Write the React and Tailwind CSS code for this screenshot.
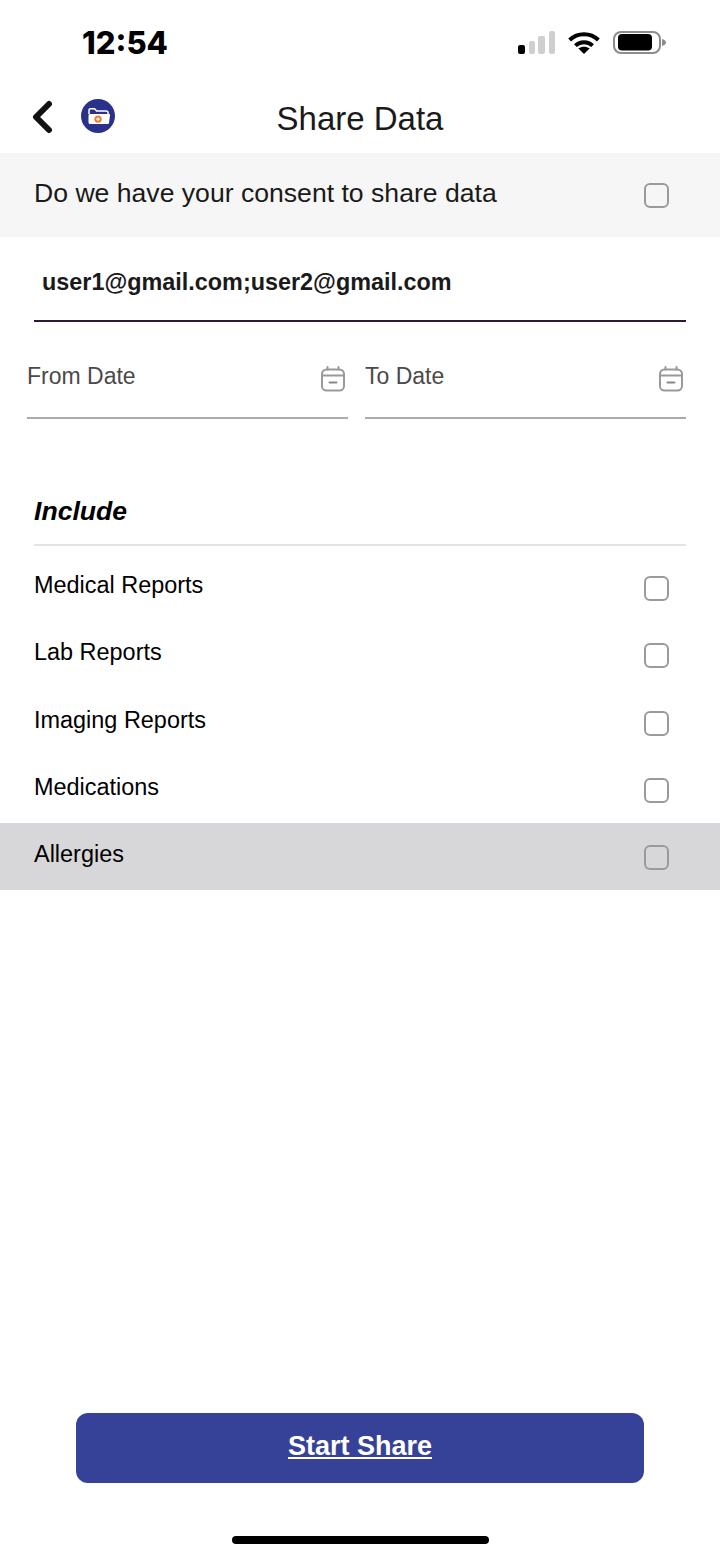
const includeItems = [
  { name: 'Medical Reports' },
  { name: 'Lab Reports' },
  { name: 'Imaging Reports' },
  { name: 'Medications' },
  { name: 'Allergies', active: true },
];

const Checkbox = () => (
  <div className="w-[25px] h-[25px] rounded-[6px] border-2 border-[#9a9a9a]" />
);

const CalendarIcon = () => (
  <svg width="26" height="26" viewBox="0 0 26 26" fill="none" stroke="#999" strokeWidth="2" strokeLinecap="round">
    <rect x="2" y="3.5" width="22" height="21" rx="4.5" />
    <path d="M2.5 9.5H23.5" />
    <path d="M7.5 1V3.5M18.5 1V3.5" />
    <path d="M9.5 16.5H16.5" stroke="#888" />
  </svg>
);

const DateField = ({ label }) => (
  <div className="flex-1 h-[97px] border-b-2 border-[#ababab] flex items-start justify-between">
    <span className="text-[23px] leading-[28px] mt-[40px] text-[#4a4a4a]">{label}</span>
    <div className="mt-[44px] mr-[2px]">
      <CalendarIcon />
    </div>
  </div>
);

const StatusBar = () => (
  <div className="h-[80px] shrink-0 flex items-start justify-between">
    <span className="ml-[82px] mt-[24px] text-[31px] leading-[38px] font-extrabold text-black font-['Inter',sans-serif]">12:54</span>
    <div className="flex items-start mt-[31px] mr-[54px]">
      <svg width="37" height="23" viewBox="0 0 37 23" className="mr-[13px]">
        <rect x="0" y="14" width="7" height="9" rx="2" fill="#000" />
        <rect x="11" y="10" width="6" height="13" rx="2" fill="#cfcfcf" />
        <rect x="20" y="5" width="7" height="18" rx="2" fill="#cfcfcf" />
        <rect x="31" y="0" width="6" height="23" rx="2" fill="#cfcfcf" />
      </svg>
      <svg width="32" height="23" viewBox="0 0 32 23" className="mr-[13px]" fill="none" stroke="#000" strokeWidth="4">
        <path d="M1.6 9C9.6 1.2 22.4 1.2 30.4 9" />
        <path d="M7.4 14.6C12.2 10 19.8 10 24.6 14.6" />
        <path d="M16 23L10.4 17.6C13.6 15 18.4 15 21.6 17.6Z" fill="#000" stroke="none" />
      </svg>
      <svg width="53" height="23" viewBox="0 0 53 23">
        <rect x="1" y="1" width="46" height="21" rx="7" fill="none" stroke="#8c8c8c" strokeWidth="2" />
        <rect x="5" y="3" width="34" height="16.5" rx="4" fill="#000" />
        <path d="M49 8C52 8.8 53 10 53 11.5S52 14.2 49 15Z" fill="#8c8c8c" />
      </svg>
    </div>
  </div>
);

const NavBar = () => (
  <div className="relative h-[73px] shrink-0 flex items-start">
    <svg width="24" height="34" viewBox="0 0 24 34" className="ml-[31px] mt-[20px]" fill="none" stroke="#111" strokeWidth="6" strokeLinecap="round" strokeLinejoin="round">
      <path d="M18 4L5 17L18 30" />
    </svg>
    <svg width="34" height="34" viewBox="0 0 34 34" className="ml-[26px] mt-[19px]">
      <circle cx="17" cy="17" r="17" fill="#29318a" />
      {/* folder back outline */}
      <path d="M8 15V11.5C8 10.4 8.7 9.8 9.8 9.8H13.6L15.6 12H25C26.2 12 27 12.7 27 13.8V15" fill="none" stroke="#fff" strokeWidth="1.5" />
      <path d="M7.5 16.5C7.5 15.6 8.2 15 9 15H28C28.8 15 29.2 15.5 29 16.2L28 24C27.9 24.7 27.3 25 26.6 25H9C8.1 25 7.5 24.4 7.5 23.5Z" fill="#fff" />
      <circle cx="17" cy="20.2" r="3.6" fill="#ee7a2e" />
      <path d="M15.1 20.2H18.9M17 18.3V22.1" stroke="#fff" strokeWidth="1.2" />
    </svg>
    <span className="absolute inset-x-0 top-[20px] text-center text-[33px] leading-[38px] text-[#1a1a1a]">Share Data</span>
  </div>
);

export default function App() {
  return (
    <div className="w-[720px] h-[1558px] bg-white flex flex-col font-['Liberation_Sans',Arial,sans-serif]">
      <StatusBar />
      <NavBar />

      {/* consent */}
      <div className="h-[84px] shrink-0 bg-[#f6f6f6] flex items-center justify-between pl-[34px] pr-[50px]">
        <span className="text-[26.6px] leading-[32px] text-[#1a1a1a] mb-[5px]">Do we have your consent to share data</span>
        <div className="mt-[1px] mr-px">
          <Checkbox />
        </div>
      </div>

      {/* email */}
      <div className="h-[85px] shrink-0 mx-[34px] border-b-2 border-[#2c1a2e] flex items-start pl-[8px]">
        <span className="mt-[31px] text-[23.4px] leading-[28px] font-bold text-[#1a1a1a]">user1@gmail.com;user2@gmail.com</span>
      </div>

      {/* dates */}
      <div className="flex gap-[17px] ml-[27px] mr-[34px]">
        <DateField label="From Date" />
        <DateField label="To Date" />
      </div>

      {/* include */}
      <div className="h-[127px] shrink-0 mx-[34px] border-b-2 border-[#e4e4e4] flex items-end pb-[17px]">
        <span className="text-[26.6px] leading-[32px] font-bold italic text-black">Include</span>
      </div>

      <div className="mt-[8px]">
        {includeItems.map((item) => (
          <div
            key={item.name}
            className={`h-[67.25px] flex items-center justify-between pl-[34px] pr-[50px] ${item.active ? 'bg-[#d7d7d9]' : 'bg-white'}`}
          >
            <span className="text-[23.45px] leading-[28px] text-black mb-[5px]">{item.name}</span>
            <div className="mr-px mt-[2px]">
              <Checkbox />
            </div>
          </div>
        ))}
      </div>

      {/* bottom action */}
      <div className="mt-auto flex flex-col items-center">
        <button className="w-[568px] h-[70px] rounded-[12px] bg-[#364298] text-white text-[27px] leading-[32px] font-bold underline pb-[4px]">
          Start Share
        </button>
        <div className="w-[257px] h-[8px] rounded-full bg-black mt-[53px] mb-[14px]" />
      </div>
    </div>
  );
}
